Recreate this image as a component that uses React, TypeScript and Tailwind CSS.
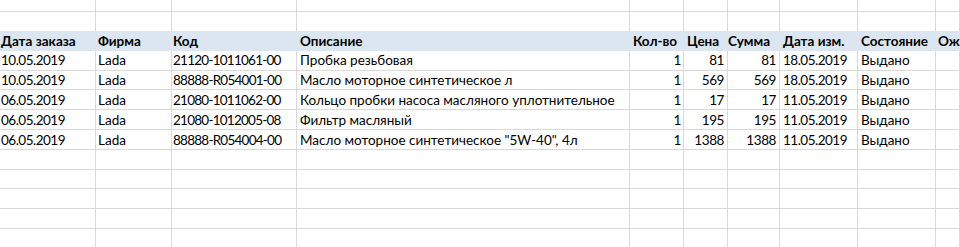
import React from "react";

const cols = [
  "w-[96px]",
  "w-[76px]",
  "w-[125px]",
  "w-[333px]",
  "w-[54px]",
  "w-[44px]",
  "w-[52px]",
  "w-[78px]",
  "w-[78px]",
  "flex-1",
];

// per-column padding / alignment / tracking for data cells
const dataCell = [
  "pl-[1px] tracking-[-0.5px]",
  "pl-[2px]",
  "pl-[1px] tracking-[-0.75px]",
  "pl-[3px]",
  "justify-end pr-[2px] tracking-[-0.4px]",
  "justify-end pr-[3px] tracking-[-0.4px]",
  "justify-end pr-[3px] tracking-[-0.4px]",
  "pl-[3px] tracking-[-0.5px]",
  "pl-[3px]",
  "pl-[2px]",
];

const headCell = [
  "pl-[1px]",
  "pl-[2px]",
  "pl-[1px]",
  "pl-[3px]",
  "pl-[3px]",
  "pl-[3px]",
  "pl-[0px]",
  "pl-[3px]",
  "pl-[3px]",
  "pl-[2px]",
];

type Row = [string, string, string, string, string, string, string, string, string];

const data: Row[] = [
  ["10.05.2019", "Lada", "21120-1011061-00", "Пробка резьбовая", "1", "81", "81", "18.05.2019", "Выдано"],
  ["10.05.2019", "Lada", "88888-R054001-00", "Масло моторное синтетическое л", "1", "569", "569", "18.05.2019", "Выдано"],
  ["06.05.2019", "Lada", "21080-1011062-00", "Кольцо пробки насоса масляного уплотнительное", "1", "17", "17", "11.05.2019", "Выдано"],
  ["06.05.2019", "Lada", "21080-1012005-08", "Фильтр масляный", "1", "195", "195", "11.05.2019", "Выдано"],
  ["06.05.2019", "Lada", "88888-R054004-00", "Масло моторное синтетическое \"5W-40\", 4л", "1", "1388", "1388", "11.05.2019", "Выдано"],
];

const headers = ["Дата заказа", "Фирма", "Код", "Описание", "Кол-во", "Цена", "Сумма", "Дата изм.", "Состояние", "Ож"];

function EmptyRow({ h, bottom = true }: { h: string; bottom?: boolean }) {
  return (
    <div className={`flex ${h}`}>
      {cols.map((c, i) => (
        <div
          key={i}
          className={`${c} shrink-0 border-r border-[#d9d9d9] ${bottom ? "border-b" : ""}`}
        />
      ))}
    </div>
  );
}

export default function App() {
  return (
    <div
      className="w-[960px] h-[247px] overflow-hidden bg-white text-[13.5px] text-black"
      style={{ fontFamily: "Lato, 'Noto Sans', sans-serif" }}
    >
      <EmptyRow h="h-[11.8px]" />
      <EmptyRow h="h-[19.2px]" bottom={false} />
      {/* header */}
      <div className="flex h-[19.8px] bg-[#dce6f1] font-bold">
        {headers.map((t, i) => (
          <div
            key={i}
            className={`${cols[i]} shrink-0 flex items-center whitespace-nowrap leading-none pt-[2px] ${headCell[i]}`}
          >
            {t}
          </div>
        ))}
      </div>
      {data.map((r, ri) => (
        <div key={ri} className="flex h-[19.8px]">
          {cols.map((c, i) => (
            <div
              key={i}
              className={`${c} shrink-0 flex items-center whitespace-nowrap leading-none pt-[2px] border-r border-b border-[#d9d9d9] ${dataCell[i]}`}
            >
              {r[i] ?? ""}
            </div>
          ))}
        </div>
      ))}
      {[0, 1, 2, 3, 4].map((k) => (
        <EmptyRow key={k} h="h-[19.8px]" />
      ))}
    </div>
  );
}
